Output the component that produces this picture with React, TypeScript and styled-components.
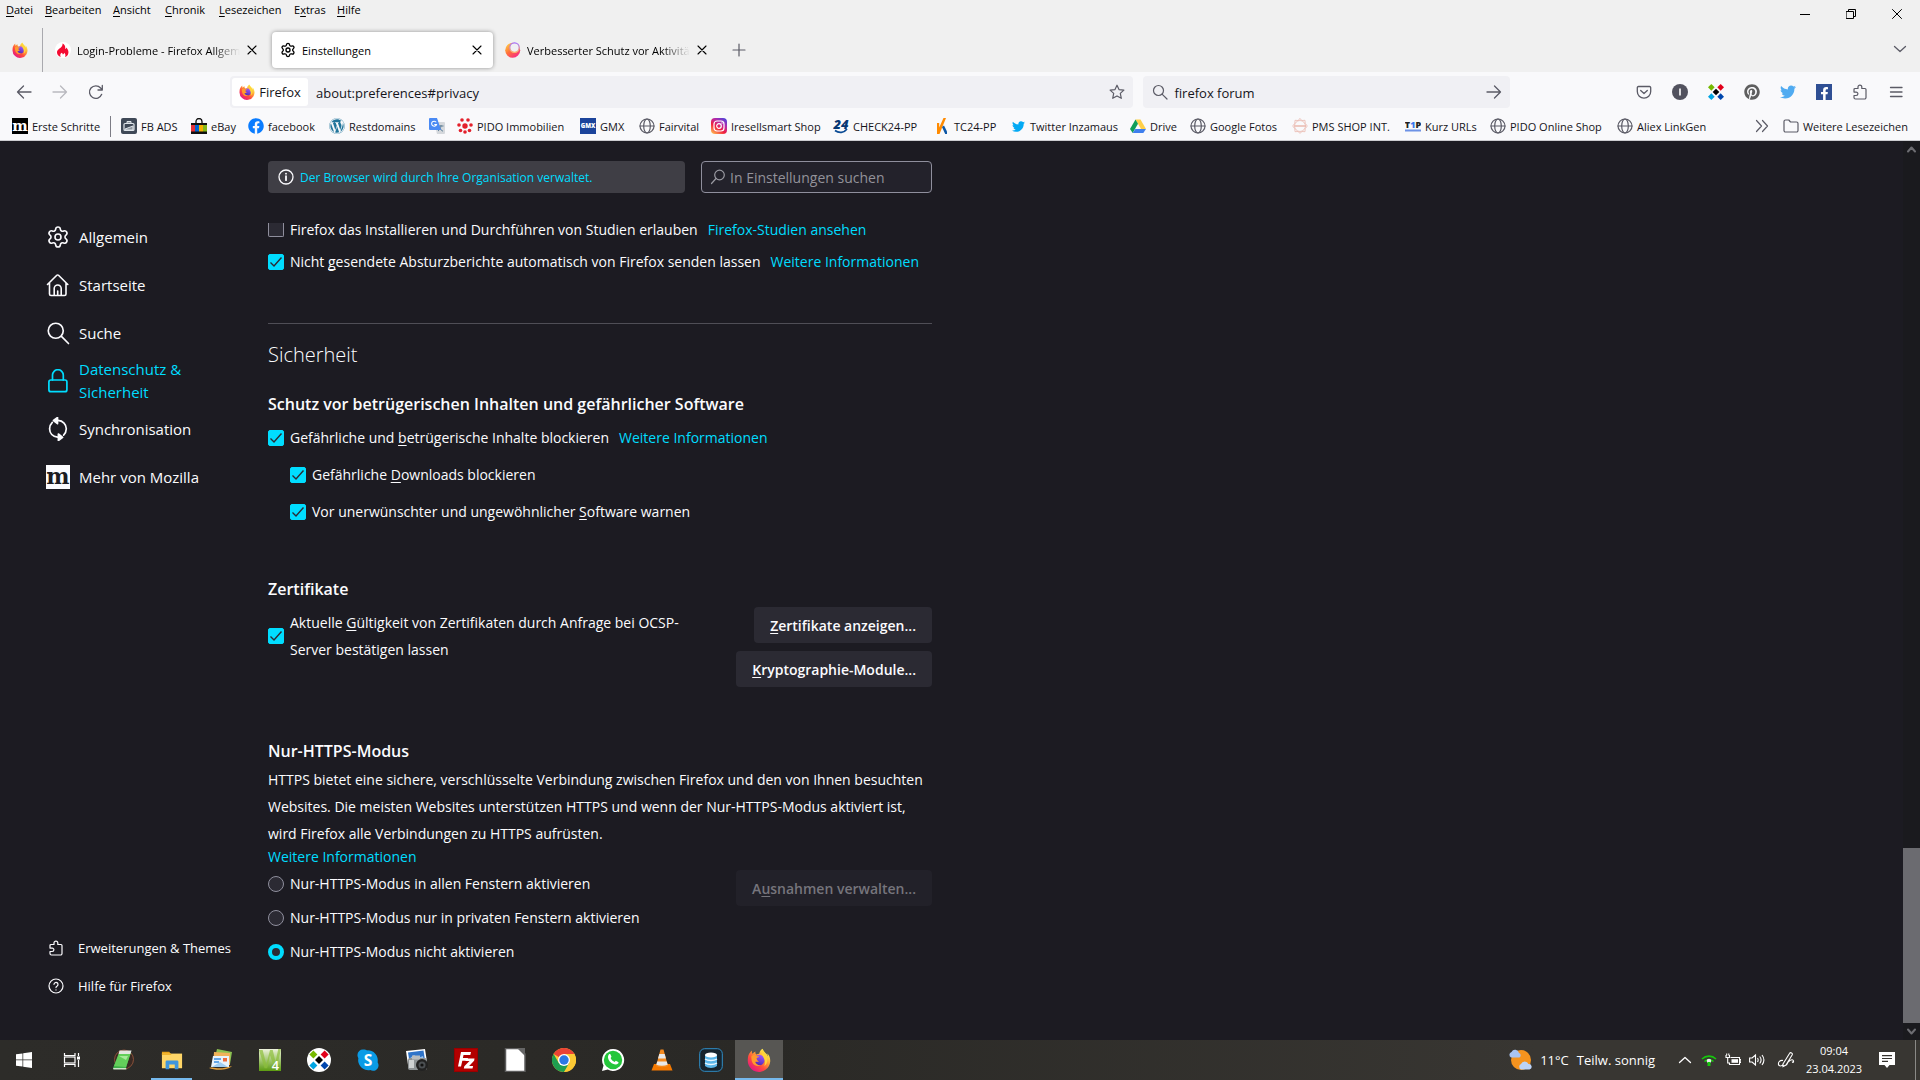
import React from "react";
import styled, { createGlobalStyle, css } from "styled-components";
import { Settings } from "lucide-react";
import {
  FaFacebook,
  FaFacebookF,
  FaPinterest,
  FaTwitter,
  FaWordpress,
} from "react-icons/fa";

const UI_FONT = '"Open Sans", "Noto Sans", sans-serif';
const ACCENT = "#00ddff";

const GlobalStyle = createGlobalStyle`
  * { box-sizing: border-box; }
  body { margin: 0; font-family: ${UI_FONT}; background: #1c1b22; overflow: hidden; }
  button, input { font-family: inherit; }
  a { text-decoration: none; color: inherit; }
  h1, h2, p, ul { margin: 0; padding: 0; }
  svg { display: block; flex-shrink: 0; }
`;

/* ---------- shared ---------- */

const Key = styled.u`
  text-underline-offset: 2px;
  text-decoration-skip-ink: none;
`;

/** Renders a label whose access key is preceded by an underscore. */
const Ak = ({ t }: { t: string }) => {
  const i = t.indexOf("_");
  if (i < 0) return <>{t}</>;
  return (
    <span>
      {t.slice(0, i)}
      <Key>{t[i + 1]}</Key>
      {t.slice(i + 2)}
    </span>
  );
};

type IconProps = { size?: number; children?: React.ReactNode; box?: number; w?: number };

const Line = ({ size = 16, box = 16, w = 1.2, children }: IconProps) => (
  <svg
    width={size}
    height={size}
    viewBox={`0 0 ${box} ${box}`}
    fill="none"
    stroke="currentColor"
    strokeWidth={w}
    strokeLinecap="round"
    strokeLinejoin="round"
    aria-hidden="true"
  >
    {children}
  </svg>
);

const Art = ({ size = 16, box = 24, children }: IconProps) => (
  <svg width={size} height={size} viewBox={`0 0 ${box} ${box}`} aria-hidden="true">
    {children}
  </svg>
);

/* ---------- drawings ---------- */

const FirefoxLogo = ({ size = 16 }: { size?: number }) => (
  <Art size={size} box={32}>
    <defs>
      <linearGradient id="ffBody" x1="0.88" y1="0.1" x2="0.2" y2="0.95">
        <stop offset="0.05" stopColor="#fff44f" />
        <stop offset="0.35" stopColor="#ffa436" />
        <stop offset="0.65" stopColor="#ff4a3f" />
        <stop offset="1" stopColor="#e31587" />
      </linearGradient>
      <linearGradient id="ffGlobe" x1="0.7" y1="0" x2="0.3" y2="1">
        <stop offset="0" stopColor="#a257ff" />
        <stop offset="1" stopColor="#4b2bb0" />
      </linearGradient>
    </defs>
    <path
      fill="url(#ffBody)"
      d="M30 11.5c-.7-1.8-2-3.700-3.200-4.300.9 1.700 1.200 3 1.300 4C26 7 22.500 5.500 20.800 1c-3 1.600-4.400 5-4.500 6.800-1.400.1-2.700.4-3.800 1-1.500-1-1.600-3.200-1.200-4.300-1.600.6-3 1.700-4 3-.8-.8-.8-3.200-.6-4.300C3.500 5.500 1.500 9 1.200 13L1 16.500a15 15 0 1 0 29-5z"
    />
    <circle cx="16.500" cy="16" r="7" fill="url(#ffGlobe)" />
    <path
      fill="#ff9b2d"
      d="M6 10.500c2.500-1.500 5-1.200 6.500 0 1.500.3 3.500.3 3.800.7-.2 1.300-3 1.600-3.600 2.300.4 2 1.500 3.500 3.300 4.500-2 .6-4-.2-5 .6.8 2.600 4 4.800 7.500 4.300-4 2.400-9.500.8-11.500-4C6 16 5.500 13 6 10.500z"
    />
    <path
      fill="#ffd43a"
      d="M21 2c.6 4 5 6 6 11.500.8 4.500-1 8.500-4 10.500 1.500-3 1.500-6.500 0-9.500-1-2-2.500-4-3-6.500-.3-2 0-4.500 1-6z"
    />
  </Art>
);

const GearIcon = ({ size = 16, w = 1.8 }) => <Settings size={size} strokeWidth={w} aria-hidden="true" />;

const HouseIcon = () => (
  <Line size={24} box={24} w={1.600}>
    <path d="M1.500 11.500 10.800 2.300a1.200 1.200 0 0 1 1.700 0l9.300 9.200M3.500 10v11a1.500 1.500 0 0 0 1.500 1.500h13.500A1.500 1.500 0 0 0 20 21V10M8.200 22v-6.500a3.500 3.500 0 0 1 7 0V22M11.700 18v4" />
  </Line>
);

const LensIcon = ({ size = 16, w = 1.2 }) => (
  <Line size={size} w={w}>
    <circle cx="6.500" cy="6.500" r="5" />
    <path d="m10.300 10.300 4.700 4.700" />
  </Line>
);

const LensLeftIcon = () => (
  <Line size={16} w={1.200}>
    <circle cx="9.500" cy="6" r="4.800" />
    <path d="M6 9.500 1.500 14.500" />
  </Line>
);

const LockIcon = () => (
  <Line size={24} box={24} w={1.700}>
    <rect x="2.900" y="11" width="18" height="11.700" rx="2" />
    <path d="M6.500 11V6.100a5.400 5.400 0 0 1 10.800 0V11" />
  </Line>
);

const SyncIcon = () => (
  <Line size={24} box={24} w={1.700}>
    <path d="M6.300 5.300A9 9 0 0 0 3.600 11.800c0 4.300 3 7.700 8 8.400M12 3.400c5 .3 8.300 4 8.300 8.400a9 9 0 0 1-2.700 6.300" />
    <path d="m11.500.5-4 3 4 3.200zM12.400 17l4.200 3.300-4.200 3.200z" fill="currentColor" />
  </Line>
);

const MozillaM = ({ size = 16, bg = "#000", fg = "#fff" }) => (
  <Art size={size}>
    <rect width="24" height="24" fill={bg} />
    <text x="12" y="19" textAnchor="middle" fontFamily='"DejaVu Serif", serif' fontWeight="bold" fontSize="22" fill={fg}>
      m
    </text>
  </Art>
);

const PuzzleIcon = ({ size = 16 }) => (
  <Line size={size} w={1.2}>
    <path d="M2 5.500A1 1 0 0 1 3 4.500h3V3a1.900 1.900 0 0 1 3.800 0v1.500h3.200a1 1 0 0 1 1 1v8a1.500 1.500 0 0 1-1.500 1.500H3.500A1.500 1.500 0 0 1 2 13.500v-2h2.200a1.700 1.700 0 0 0 0-3.400H2z" />
  </Line>
);

const HelpIcon = () => (
  <Line size={16} w={1.200}>
    <circle cx="8" cy="8" r="7" />
    <path d="M6 6.300a2 2 0 1 1 3.200 1.700C8.400 8.500 8 8.800 8 9.600M8 11.800v.1" />
  </Line>
);

const InfoIcon = () => (
  <Line size={16} w={1.300}>
    <circle cx="8" cy="8" r="7" />
    <path d="M8 7.200v4M8 4.600v.1" strokeWidth="1.800" />
  </Line>
);

const CloseIcon = ({ size = 10 }) => (
  <Line size={size} box={10} w={1.100}>
    <path d="m1 1 8 8M9 1 1 9" />
  </Line>
);

const ArrowLeft = () => (
  <Line w={1.300}>
    <path d="M15 8H1.500M7.500 2l-6 6 6 6" />
  </Line>
);
const ArrowRight = () => (
  <Line w={1.300}>
    <path d="M1 8h13.500M8.500 2l6 6-6 6" />
  </Line>
);
const ReloadIcon = () => (
  <Line w={1.300}>
    <path d="M13.700 10.300A6.300 6.300 0 1 1 12.600 4L14 5.500M14.300 1.500V6H10" />
  </Line>
);
const StarIcon = () => (
  <Line w={1.200}>
    <path d="m8 1.200 2 4.400 4.900.5-3.600 3.300 1 4.900L8 11.900l-4.300 2.400 1-4.900L1.100 6.100 6 5.600z" />
  </Line>
);
const ChevronDown = () => (
  <Line size={14} box={14} w={1.300}>
    <path d="m1.500 4.500 5.500 5 5.500-5" />
  </Line>
);
const PlusIcon = () => (
  <Line size={14} box={14} w={1.200}>
    <path d="M7 1v12M1 7h12" />
  </Line>
);
const PocketIcon = () => (
  <Line w={1.300}>
    <path d="M2.500 2.500h11A1.300 1.300 0 0 1 14.700 4v3.500a6.700 6.700 0 0 1-13.400 0V4A1.300 1.300 0 0 1 2.500 2.500z" />
    <path d="m4.700 6.500 3.300 3 3.300-3" />
  </Line>
);
const InfoDot = () => (
  <Art box={16}>
    <circle cx="8" cy="8" r="8" fill="#52525e" />
    <rect x="7.200" y="4.500" width="1.600" height="7" fill="#fff" />
  </Art>
);
const Diamonds = ({ size = 16, disc = false }) => (
  <Art size={size} box={24}>
    {disc && <circle cx="12" cy="12" r="12" fill="#fff" />}
    <g transform={disc ? "translate(2.400 2.400) scale(.8)" : undefined}>
      <path fill="#76b900" d="m5 0 5 5-5 5-5-5z" />
      <path fill="#e2001a" d="m19 0 5 5-5 5-5-5z" />
      <path fill="#000" d="m12 7 5 5-5 5-5-5z" />
      <path fill="#00a5e3" d="m5 14 5 5-5 5-5-5z" />
      <path fill="#0046ad" d="m19 14 5 5-5 5-5-5z" />
    </g>
  </Art>
);
const FacebookSquare = () => (
  <FacebookTile>
    <FaFacebookF size={13} />
  </FacebookTile>
);
const MenuLines = () => (
  <Line w={1.300}>
    <path d="M2.500 3.500h11.500M2.500 8h11.500M2.500 12.500h11.500" />
  </Line>
);

const GlobeIcon = () => (
  <Line w={1.200}>
    <circle cx="8" cy="8" r="7" />
    <ellipse cx="8" cy="8" rx="3.300" ry="7" />
    <path d="M1 8h14" />
  </Line>
);
const FolderIcon = () => (
  <Line w={1.200}>
    <path d="M1 3.500A1.500 1.500 0 0 1 2.500 2h3.300L7.500 4H13.500A1.500 1.500 0 0 1 15 5.500v7A1.500 1.500 0 0 1 13.500 14h-11A1.500 1.500 0 0 1 1 12.500z" />
  </Line>
);
const BagIcon = () => (
  <Art box={16}>
    <rect width="16" height="16" rx="2" fill="#3f4957" />
    <rect x="3" y="5.500" width="10" height="7" rx="1" fill="none" stroke="#dfe5ea" strokeWidth="1.200" />
    <path d="M6 5.500v-2h4v2M4 11l8-3v4H4z" fill="#dfe5ea" fillOpacity=".5" stroke="#dfe5ea" />
  </Art>
);
const EbayIcon = () => (
  <Art box={16}>
    <path d="M5 6V3.500a3 3 0 0 1 6 0V6" fill="none" stroke="#111" strokeWidth="1.300" />
    <rect y="5" width="16" height="2.500" fill="#111" />
    <rect y="7" width="4" height="7" fill="#e53238" />
    <rect x="4" y="7" width="4" height="7" fill="#0064d2" />
    <rect x="8" y="7" width="4" height="7" fill="#f5af02" />
    <rect x="12" y="7" width="4" height="7" fill="#86b817" />
    <rect y="13.500" width="16" height="2.500" fill="#111" />
  </Art>
);
const TranslateIcon = () => (
  <Art box={16}>
    <path d="M5 4h10a1 1 0 0 1 1 1v10a1 1 0 0 1-1 1H8z" fill="#d5d8dc" />
    <path d="M9.500 8h5M12 7v1c-.3 2-1.500 4-3 5M10.500 9.500c.8 1.800 2 3 3.500 3.700" stroke="#5f7f95" fill="none" />
    <path d="M1 0h7l4 12H1a1 1 0 0 1-1-1V1a1 1 0 0 1 1-1z" fill="#4a8af4" />
    <path d="M7.200 4.300A2.500 2.500 0 1 0 7.500 6.500H5.300" stroke="#fff" strokeWidth="1.100" fill="none" />
  </Art>
);
const DotsIcon = () => (
  <Art box={16}>
    <g fill="#e3202b">
      <circle cx="8" cy="8" r="2.700" />
      <circle cx="5" cy="2" r="1.800" />
      <circle cx="11" cy="2" r="1.800" />
      <circle cx="14" cy="7" r="1.800" />
      <circle cx="2" cy="7" r="1.800" />
      <circle cx="3.500" cy="12.500" r="1.800" />
      <circle cx="8" cy="14" r="1.800" />
      <circle cx="12.500" cy="12.500" r="1.800" />
    </g>
  </Art>
);
const GmxIcon = () => (
  <Art box={16}>
    <rect width="16" height="16" fill="#1c449b" />
    <text x="8" y="10.200" textAnchor="middle" fontFamily='"Open Sans", sans-serif' fontWeight="800" fontSize="6" fill="#fff">
      GMX
    </text>
  </Art>
);
const InstaIcon = () => (
  <Art box={16}>
    <defs>
      <linearGradient id="insta" x1="0.1" y1="1" x2="0.8" y2="0">
        <stop offset="0" stopColor="#fec053" />
        <stop offset="0.4" stopColor="#f2203e" />
        <stop offset="0.7" stopColor="#b729a8" />
        <stop offset="1" stopColor="#5342d6" />
      </linearGradient>
    </defs>
    <rect width="16" height="16" rx="4" fill="url(#insta)" />
    <rect x="3" y="3" width="10" height="10" rx="3" fill="none" stroke="#fff" strokeWidth="1.200" />
    <circle cx="8" cy="8" r="2.300" fill="none" stroke="#fff" strokeWidth="1.200" />
    <circle cx="11" cy="5" r=".7" fill="#fff" />
  </Art>
);
const Check24Icon = () => (
  <Art box={16}>
    <text x="8" y="10.500" textAnchor="middle" fontFamily='"Open Sans", sans-serif' fontWeight="800" fontStyle="italic" fontSize="13" fill="#063773">
      24
    </text>
    <path d="M2 12.500c4 3 9 2.500 12-1.500" fill="none" stroke="#0a4a94" strokeWidth="1.700" />
  </Art>
);
const TarifIcon = () => (
  <Art box={16}>
    <path d="M3 5h2.200v4.500L9.500 0H12L5.500 16H3z" fill="#ff8a00" />
    <path d="m8 9 2-1.500 3 6V16h-1.800z" fill="#0d57a6" />
  </Art>
);
const DriveIcon = () => (
  <Art box={16}>
    <path d="M5.500 1.500h5L16 11h-5z" fill="#ffcf48" />
    <path d="M5.500 1.500 8 5.800 2.700 15 0 11z" fill="#0f9d58" />
    <path d="M5.300 11H16l-2.700 4H2.700z" fill="#3f7fee" />
  </Art>
);
const SealIcon = () => (
  <Line w={0.8}>
    <g stroke="#eab9ae">
      <circle cx="8" cy="8" r="5.500" />
      <path d="M8 .7 10 2.500l3-.2.200 3L15.300 8l-2.100 2.700-.2 3-3-.2L8 15.300 6 13.500l-3 .2-.2-3L.7 8l2.100-2.700.2-3 3 .2z" />
      <path d="M3 8h10" strokeWidth="1.500" />
    </g>
  </Line>
);
const T1pIcon = () => (
  <Art box={16}>
    <text x="8" y="9.500" textAnchor="middle" fontFamily='"Open Sans", sans-serif' fontWeight="800" fontSize="9" fill="#222">
      T<tspan fill="#3a76ee">1</tspan>P
    </text>
    <rect y="11.500" width="16" height="2" fill="#6d92e6" />
  </Art>
);
const FlameIcon = () => (
  <Art box={16}>
    <circle cx="8" cy="8" r="8" fill="#fff" />
    <path
      d="M7.500 1.500c3 1.500 3 4 2.500 5.500.7 0 1.200-.6 1.300-1.400C13.500 8 14 10.500 13 12.500c-.7 1.500-2 2.300-3 2.500.8-1.300.5-3-.8-4.200-.2 1-.8 1.500-1.400 1.700C7.600 11.500 7 11 6.500 10.800c-1.500 1.200-1.500 3-.7 4.200C3.500 14.300 2 12.500 2 10.500 2 7.500 4.500 7 6.300 5 7.300 4 7.700 2.800 7.500 1.500z"
      fill="#f40b32"
    />
  </Art>
);
const OrbIcon = () => (
  <Art box={16}>
    <defs>
      <linearGradient id="orb" x1="0" y1="0" x2="0.8" y2="1">
        <stop offset="0" stopColor="#ffe14a" />
        <stop offset="0.5" stopColor="#ff7139" />
        <stop offset="1" stopColor="#f8238c" />
      </linearGradient>
      <linearGradient id="orbRing" x1="0" y1="0" x2="0" y2="1">
        <stop offset="0" stopColor="#a26bff" />
        <stop offset="1" stopColor="#ffb36b" />
      </linearGradient>
    </defs>
    <circle cx="7.700" cy="8.300" r="7.500" fill="url(#orb)" />
    <circle cx="9.500" cy="5.600" r="4.700" fill="#efeff3" stroke="url(#orbRing)" strokeWidth="1.300" />
  </Art>
);

/* taskbar drawings */
const WindowsIcon = () => (
  <Art size={16} box={16}>
    <path fill="#fff" d="M0 2.300 6.500 1.400v6.200H0zM7.200 1.300 16 0v7.600H7.200zM0 8.300h6.500v6.300L0 13.700zM7.200 8.300H16V16l-8.800-1.200z" />
  </Art>
);
const TaskViewIcon = () => (
  <Art size={18} box={18}>
    <g fill="none" stroke="#fff" strokeWidth="1.200">
      <path d="M1.500 2v2.500h10.500V2M1.500 16v-2.500h10.500V16M15.500 2v3M15.500 9v7" />
      <rect x="1.500" y="6" width="10.500" height="6" />
    </g>
    <rect x="14" y="5.500" width="3" height="3" fill="#fff" />
  </Art>
);
const NotebookIcon = () => (
  <Art size={24}>
    <circle cx="13" cy="11.500" r="9.500" fill="#3a2a24" stroke="#8a5038" />
    <path d="M9 3.500h11l-5 16.500H2z" fill="#3fae49" />
    <path d="M8.500 2.500h12l-1 3.500H7.500z" fill="#e3e6e0" />
    <path d="M7.500 6h12L15 19 3 18z" fill="#63cf5a" />
    <path d="m8 8 9 0-2 4z" fill="#a8eb9a" />
    <path d="M2 20h13l.5 1.500H2.500z" fill="#c9e6c6" />
  </Art>
);
const ExplorerIcon = () => (
  <Art size={22}>
    <path d="M1 3h8l2 3H1z" fill="#e8a31a" />
    <path d="M1 5h22v16H1z" fill="#ffd667" />
    <path d="M1 4.500h9l1.500 2H1z" fill="#f0b32c" />
    <path d="M5 14a1.500 1.500 0 0 1 1.500-1.500h11A1.500 1.500 0 0 1 19 14v8h-4v-5H9v5H5z" fill="#3f96dd" />
  </Art>
);
const MailIcon = () => (
  <Art size={24}>
    <path d="m8 1 15 3-2 12-16-3z" fill="#8cc152" />
    <path d="m5 4 16 1v12H4z" fill="#f0b25a" />
    <path d="M4 8h16v11H2z" fill="#e8f3fc" />
    <path d="M5 11h7M5 14h5" stroke="#3a8ee0" strokeWidth="1.500" />
    <path d="m3 19 8-5 8 5z" fill="#9fcdf2" />
    <rect x="14" y="10" width="4" height="3.500" fill="#ef6b3a" />
    <path d="M0 20c6-2 8 3 23-2-3 4-16 5-23 2z" fill="#e6a23c" />
  </Art>
);
const W4Icon = () => (
  <Art size={22}>
    <defs>
      <linearGradient id="w4" x1="0" y1="0" x2="0" y2="1">
        <stop offset="0" stopColor="#eef3dc" />
        <stop offset="1" stopColor="#5c9c10" />
      </linearGradient>
    </defs>
    <rect width="24" height="24" fill="url(#w4)" />
    <path d="M0 1h4l4 16 4-16h3l3 13 3-14h3l-4 18h-4L12 7 9 21H6z" fill="#8dbf3c" fillOpacity=".7" />
    <text x="18" y="22.500" textAnchor="middle" fontFamily='"Open Sans", sans-serif' fontWeight="600" fontSize="14" fill="#fff">
      4
    </text>
  </Art>
);
const SkypeIcon = () => (
  <Art size={22}>
    <path d="M7 .5c2 0 3 .6 4 1a11 11 0 0 1 11.500 13c.8 1.500 1 2.500 1 3.500a6 6 0 0 1-9 5A11 11 0 0 1 1.500 10C.8 8.500.5 7.500.5 6.500A6 6 0 0 1 7 .5z" fill="#0a9be6" />
    <text x="12" y="18" textAnchor="middle" fontFamily='"Open Sans", sans-serif' fontWeight="bold" fontSize="17" fill="#fff">
      S
    </text>
  </Art>
);
const CameraIcon = () => (
  <Art size={24}>
    <path d="m1 3 19-2 2 13L3 17z" fill="#fff" />
    <path d="m3 4.500 15.500-2L20 12 4.500 14z" fill="#2f74c9" />
    <path d="m4 11 5-4 4 3 5-2 1 5H5z" fill="#9cc3ec" />
    <rect x="3" y="10" width="19" height="12" rx="2" fill="#8e9395" />
    <rect x="7" y="7.500" width="8" height="4" fill="#b9bdbf" />
    <rect x="4" y="12" width="5" height="8" fill="#cfd2d3" />
    <circle cx="17" cy="17" r="6" fill="#222" />
    <circle cx="17" cy="17" r="3.500" fill="#4b4f52" />
    <circle cx="17" cy="17" r="1.600" fill="#111" />
  </Art>
);
const FileZillaIcon = () => (
  <Art size={24}>
    <rect width="24" height="24" fill="#b30000" />
    <rect x=".5" y=".5" width="23" height="23" fill="none" stroke="#7c0000" strokeDasharray="1 1" />
    <path d="M7 4h10l-.7 3H9.500l-.6 3H14l-.6 2.800H8.300L7 18.500H4z" fill="#fff" />
    <path d="M12 10.500h8.500l-.4 2.300-5 5.200h4l-.6 2.500H9.800l.5-2.300 5.200-5.200H11.500z" fill="#fff" />
  </Art>
);
const DocumentIcon = () => (
  <Art size={24}>
    <path d="M2.500.5H17l5 5.500v17.500h-19.500z" fill="#fff" stroke="#5d5d5d" strokeWidth="1.500" />
    <path d="M14 0h8v8z" fill="#666" />
  </Art>
);
const ChromeIcon = () => (
  <Art size={24}>
    <circle cx="12" cy="12" r="12" fill="#fcc934" />
    <path d="M12 12 1.600 6A12 12 0 0 1 22.400 6H12z" fill="#ea4335" />
    <path d="M12 24A12 12 0 0 1 1.600 6l5.200 9L12 18h5.200z" fill="#1e9e50" />
    <path d="M12 24 17.200 15 12 12l-5 3z" fill="#1e9e50" />
    <path d="M22.400 6A12 12 0 0 1 12 24l5.200-9V6z" fill="#fcc934" />
    <circle cx="12" cy="12" r="6" fill="#fff" />
    <circle cx="12" cy="12" r="4.700" fill="#2a78e4" />
  </Art>
);
const WhatsAppIcon = () => (
  <Art size={24}>
    <path d="M12 1a11 11 0 1 1-5.200 20.600L1 23l1.500-5.500A11 11 0 0 1 12 1z" fill="#fff" />
    <circle cx="12" cy="12" r="9.200" fill="#25c63b" />
    <path
      d="M8 6.300c.5-.5 1.200-.5 1.500.1l.9 2c.2.500-.6 1.200-.8 1.600.7 1.800 2.300 3.300 4.100 4 .5-.5 1-1.300 1.500-1.100l2 1c.5.300.3 1.200-.1 1.700-2 2-5.500.6-7.500-1.300C7.300 12.300 6 8.500 8 6.300z"
      fill="#fff"
    />
  </Art>
);
const VlcIcon = () => (
  <Art size={24}>
    <path d="M4 16h16l2.500 6.500h-21z" fill="#f57900" />
    <path d="M10.500 1.500h3L18 18c-3 1.600-9 1.600-12 0z" fill="#f58a1f" />
    <path d="m9.300 6 5.400 0 1.200 4.500H8z" fill="#e9e9e9" />
    <path d="M7.200 13.500h9.600l.9 3.200c-3.500 1.300-8 1.300-11.400 0z" fill="#e9e9e9" />
  </Art>
);
const DatabaseIcon = () => (
  <Art size={24}>
    <rect x=".7" y=".7" width="22.600" height="22.600" rx="5" fill="#17242e" stroke="#2f8fc9" />
    <path d="M6 7h12v11c-3 2.500-9 2.500-12 0z" fill="#5ab6ea" />
    <ellipse cx="12" cy="7" rx="6" ry="2.500" fill="#fff" />
    <path d="M6 11c3 2 9 2 12 0M6 15c3 2 9 2 12 0" stroke="#e8f6ff" strokeWidth="1.500" fill="none" />
  </Art>
);
const WeatherIcon = () => (
  <Art size={24}>
    <circle cx="13" cy="12" r="10" fill="#f5931e" />
    <path d="M3 9.500a3 3 0 0 1 .5-5.500 4 4 0 0 1 7.500 1 2.500 2.500 0 0 1 .5 4.500z" fill="#a9c4f2" />
    <path d="M13 21.500a3 3 0 0 1 0-5.500 4 4 0 0 1 7.500 0 2.800 2.800 0 0 1 1 5.500z" fill="#bcd3f8" />
  </Art>
);
const WifiIcon = () => (
  <Art size={16} box={16}>
    <g fill="none" stroke="#16c60c" strokeWidth="1.600">
      <path d="M1 7a10 10 0 0 1 14 0M3.500 9.500a6.500 6.500 0 0 1 9 0" />
    </g>
    <circle cx="8" cy="9" r="2.300" fill="#e8e8e8" />
    <path d="M6.500 10h3v4h-3z" fill="#16c60c" />
  </Art>
);
const BatteryIcon = () => (
  <Art size={16} box={16}>
    <g fill="none" stroke="#fff" strokeWidth="1.100">
      <path d="M5.500 5.500h9v7h-10v-2M14.500 7.500h1.300v3h-1.300M1 3v2.500h3.500V3M2.700 5.500V11h1.800M1.700 1.500v2M3.800 1.500v2" />
    </g>
    <rect x="6.500" y="7.200" width="6.500" height="3.600" fill="#fff" />
  </Art>
);
const SpeakerIcon = () => (
  <Art size={16} box={16}>
    <path d="M.6 6h2.500L6.500 3v10L3.100 10H.6zM8.500 6c.8 1.200.8 2.800 0 4M10.700 4.500c1.600 2 1.600 5 0 7M13 3c2.300 3 2.300 7 0 10" fill="none" stroke="#fff" strokeWidth="1.100" />
  </Art>
);
const PenIcon = () => (
  <Art size={18} box={18}>
    <path d="M6 13 12.500 2.500a1.500 1.500 0 0 1 2.600 1.500L9 14l-3 1.500zM6 9.500c-3-.5-5 1.500-4.500 4 .5 2 3 2 4.500 0M9.500 14c1.500-4 6-7 7-4 .3 1.500-1.500 2-1 .5" fill="none" stroke="#fff" strokeWidth="1.100" />
  </Art>
);
const NoteIcon = () => (
  <Art size={18} box={18}>
    <path d="M1 1h16v13h-5.500L9 17l-2.500-3H1z" fill="#fff" />
    <path d="M4 4.700h10M4 7.500h10M4 10.300h6" stroke="#35332f" strokeWidth="1.200" />
  </Art>
);

/* ---------- layout ---------- */

const Screen = styled.div`
  display: flex;
  flex-direction: column;
  height: 100vh;
  color: #15141a;
`;

const bare = css`
  display: flex;
  align-items: center;
  justify-content: center;
  padding: 0;
  border: 0;
  background: none;
  color: inherit;
`;

const TitleArea = styled.header`
  display: flex;
  justify-content: space-between;
  height: 72px;
  background: #f0f0f0;
`;
const TitleLeft = styled.div`
  display: flex;
  flex-direction: column;
  justify-content: space-between;
`;
const MenuBar = styled.nav`
  display: flex;
  height: 18px;
  padding-left: 6px;
`;
const MenuItem = styled.button<{ $w: number }>`
  ${bare}
  justify-content: flex-start;
  width: ${(p) => p.$w}px;
  color: #000;
  font-size: 11px;
  white-space: nowrap;
`;
const TabStrip = styled.div`
  display: flex;
  align-items: center;
  height: 44px;
`;
const PinnedTab = styled.button`
  ${bare}
  width: 43px;
  height: 44px;
  padding-right: 3px;
  border-right: 1px solid #a9a9ae;
  margin-right: 2px;
`;
const Tab = styled.div<{ $active?: boolean }>`
  display: flex;
  align-items: center;
  gap: 6px;
  width: 221px;
  height: 36px;
  margin: 0 2px;
  padding: 0 10px 0 8px;
  border-radius: 4px;
  color: #000;
  font-size: 11px;
  ${(p) => p.$active && "background: #fff; box-shadow: 0 0 4px rgba(0, 0, 0, 0.4);"}
`;
const TabTitle = styled.span<{ $fade?: boolean }>`
  flex: 1;
  overflow: hidden;
  white-space: nowrap;
  ${(p) => p.$fade && "mask-image: linear-gradient(to left, transparent, #000 28px);"}
`;
const TabClose = styled.button`
  ${bare}
  width: 12px;
  height: 20px;
`;
const NewTab = styled.button`
  ${bare}
  width: 34px;
  height: 32px;
  margin-left: 2px;
  color: #5b5b66;
`;
const TitleRight = styled.div`
  display: flex;
  flex-direction: column;
  align-items: flex-end;
`;
const WindowButtons = styled.div`
  display: flex;
  color: #000;
`;
const WindowButton = styled.button`
  ${bare}
  width: 46px;
  height: 28px;
`;
const TabsMenu = styled.button`
  ${bare}
  width: 40px;
  height: 42px;
  color: #5b5b66;
`;

const NavBar = styled.div`
  display: flex;
  align-items: center;
  height: 40px;
  padding: 0 6px;
  background: #f9f9fb;
  color: #5b5b66;
`;
const ToolButton = styled.button<{ $dim?: boolean; $inner?: boolean }>`
  ${bare}
  width: ${(p) => (p.$inner ? 32 : 36)}px;
  height: 32px;
  opacity: ${(p) => (p.$dim ? 0.4 : 1)};
`;
const UrlBar = styled.div`
  display: flex;
  align-items: center;
  flex: 716;
  height: 32px;
  margin-left: 116px;
  padding-left: 2px;
  border-radius: 4px;
  background: #f0f0f4;
`;
const Identity = styled.button`
  ${bare}
  gap: 4px;
  width: 76px;
  height: 28px;
  border-radius: 3px;
  background: #fff;
  color: #15141a;
  font-size: 13px;
`;
const BarInput = styled.input`
  flex: 1;
  min-width: 0;
  height: 28px;
  padding: 2px 8px 0;
  border: 0;
  outline: 0;
  background: none;
  color: #15141a;
  font-size: 13px;
`;
const SearchBar = styled.div`
  display: flex;
  align-items: center;
  flex: 284;
  height: 32px;
  margin: 0 116px 0 10px;
  padding-left: 9px;
  border-radius: 4px;
  background: #f0f0f4;
  ${BarInput} { padding-left: 6px; }
`;
const FacebookTile = styled.span`
  display: flex;
  align-items: flex-end;
  justify-content: center;
  width: 16px;
  height: 16px;
  background: #2f4f94;
  color: #fff;
`;

const BookmarksBar = styled.nav`
  display: flex;
  align-items: center;
  height: 29px;
  padding: 0 12px;
  border-bottom: 1px solid #ccccd0;
  background: #f9f9fb;
  font-size: 11px;
`;
const Bookmark = styled.a<{ $w?: number }>`
  display: flex;
  align-items: center;
  gap: 4px;
  width: ${(p) => (p.$w ? `${p.$w}px` : "auto")};
  white-space: nowrap;
`;
const BookmarkIcon = styled.span<{ $c?: string }>`
  display: flex;
  justify-content: center;
  width: 16px;
  color: ${(p) => p.$c || "#5b5b66"};
`;
const BookmarkSeparator = styled.span`
  width: 1px;
  height: 21px;
  margin-right: 10px;
  background: #7c7c85;
`;
const Overflow = styled.button`
  ${bare}
  margin-left: auto;
  margin-right: 14px;
  color: #5b5b66;
`;

/* ---------- preferences page ---------- */

const Page = styled.div`
  display: flex;
  flex: 1;
  min-height: 0;
  background: #1c1b22;
  color: #fbfbfe;
`;
const Sidebar = styled.aside`
  display: flex;
  flex-direction: column;
  justify-content: space-between;
  width: 268px;
  padding: 72px 0 35px 46px;
`;
const Categories = styled.nav`
  display: flex;
  flex-direction: column;
`;
const Category = styled.a<{ $active?: boolean }>`
  display: flex;
  align-items: center;
  gap: 9px;
  height: 48px;
  padding-right: 60px;
  color: ${(p) => (p.$active ? ACCENT : "inherit")};
  font-size: 15px;
  line-height: 23px;
`;
const FooterLink = styled.a`
  display: flex;
  align-items: center;
  gap: 14px;
  height: 38px;
  padding-left: 2px;
  font-size: 13px;
`;

const Main = styled.main`
  flex: 1;
  padding-top: 20px;
  font-size: 14px;
`;
const Column = styled.div`
  width: 100%;
  max-width: 664px;
`;
const TopRow = styled.div`
  display: flex;
  gap: 16px;
  height: 32px;
`;
const Managed = styled.a`
  display: flex;
  align-items: center;
  gap: 6px;
  flex: 407;
  padding-left: 10px;
  border-radius: 4px;
  background: #3f3e45;
  color: ${ACCENT};
  font-size: 12px;
  svg { color: #fbfbfe; }
`;
const PrefSearch = styled.label`
  display: flex;
  align-items: center;
  gap: 4px;
  flex: 221;
  min-width: 0;
  padding-left: 8px;
  border: 1px solid #8f8f9d;
  border-radius: 4px;
  background: #23222b;
  color: #9a9aa2;
  input {
    flex: 1;
    min-width: 0;
    padding: 0;
    border: 0;
    outline: 0;
    background: none;
    color: #fbfbfe;
    font-size: 14px;
  }
  input::placeholder { color: #93929a; opacity: 1; }
`;
const Row = styled.div<{ $mt?: number; $indent?: boolean }>`
  display: flex;
  align-items: center;
  gap: 10px;
  margin-top: ${(p) => p.$mt || 0}px;
  padding-left: ${(p) => (p.$indent ? 22 : 0)}px;
  line-height: 22px;
`;
const Choice = styled.label<{ $tall?: boolean }>`
  display: flex;
  align-items: center;
  gap: 6px;
  line-height: ${(p) => (p.$tall ? 27 : 22)}px;
`;
const Box = styled.input<{ $clipped?: boolean }>`
  appearance: none;
  flex-shrink: 0;
  width: 16px;
  height: 16px;
  margin: 0;
  border: 1px solid #8f8f9d;
  border-radius: 2px;
  background: #2b2a33;
  &[type="radio"] { border-radius: 50%; }
  &[type="radio"]:checked { border: 4px solid ${ACCENT}; }
  &[type="checkbox"]:checked {
    border-color: ${ACCENT};
    background: ${ACCENT}
      url("data:image/svg+xml,%3Csvg xmlns='http://www.w3.org/2000/svg' viewBox='0 0 14 14'%3E%3Cpath d='M1.500 7.500 5 11l7.500-8.500' fill='none' stroke='%232b2a33' stroke-width='1.400'/%3E%3C/svg%3E")
      center / 14px no-repeat;
  }
  ${(p) => p.$clipped && "height: 14px; border-top: 0; border-radius: 0 0 2px 2px;"}
`;
const TextLink = styled.a`
  color: ${ACCENT};
`;
const Rule = styled.hr`
  height: 1px;
  margin: 50px 0 0;
  border: 0;
  background: #4f4e56;
`;
const SectionTitle = styled.h1`
  margin-top: 16px;
  font-size: 20px;
  font-weight: 300;
  line-height: 30px;
`;
const GroupTitle = styled.h2<{ $mt: number }>`
  margin-top: ${(p) => p.$mt}px;
  font-size: 16px;
  font-weight: 600;
  line-height: 24px;
`;
const Split = styled.div<{ $mt?: number }>`
  display: flex;
  justify-content: space-between;
  align-items: flex-start;
  margin-top: ${(p) => p.$mt || 0}px;
`;
const Stack = styled.div`
  display: flex;
  flex-direction: column;
  align-items: flex-end;
  gap: 8px;
`;
const Radios = styled.div`
  display: flex;
  flex-direction: column;
  gap: 12px;
  padding-top: 3px;
`;
const PrefButton = styled.button`
  height: 36px;
  padding: 0 16px;
  border: 0;
  border-radius: 4px;
  background: #2b2a33;
  color: #fbfbfe;
  font-size: 14px;
  font-weight: 600;
  white-space: nowrap;
  &:disabled { background: #222129; color: #76757c; }
`;
const OcspChoice = styled.div`
  max-width: 430px;
  padding-top: 2px;
`;
const Paragraph = styled.p`
  padding-top: 3px;
  line-height: 27px;
`;
const MoreLine = styled.p`
  line-height: 20px;
`;

const ScrollTrack = styled.div`
  display: flex;
  flex-direction: column;
  justify-content: space-between;
  align-items: center;
  width: 17px;
  background: #1a1a1e;
  color: #6d6d72;
`;
const ScrollEnd = styled.button`
  ${bare}
  width: 17px;
  height: 17px;
`;
const Thumb = styled.div`
  width: 17px;
  height: 175px;
  margin-top: auto;
  background: #6b6b70;
`;

/* ---------- taskbar ---------- */

const Taskbar = styled.footer`
  display: flex;
  justify-content: space-between;
  height: 40px;
  background: linear-gradient(90deg, #2d2c29, #2a2926 40%, #383632 80%, #383632);
  color: #fff;
`;
const TaskGroup = styled.div`
  display: flex;
  align-items: stretch;
`;
const AppGroup = styled(TaskGroup)`
  margin-left: 2px;
`;
const SystemButton = styled.button`
  ${bare}
  width: 48px;
`;
const TaskButton = styled.button<{ $open?: boolean; $active?: boolean }>`
  ${bare}
  width: ${(p) => (p.$active ? 48 : 41)}px;
  margin: 0 ${(p) => (p.$active ? 0 : 4)}px;
  border-top: 2px solid transparent;
  border-bottom: 2px solid ${(p) => (p.$open ? "#76b9ed" : "transparent")};
  ${(p) => p.$active && "background: #575653; border-top-color: #575653;"}
`;
const Weather = styled.button`
  ${bare}
  gap: 8px;
  margin-right: 22px;
  color: #fff;
  font-size: 13px;
`;
const TrayIcons = styled.div`
  display: flex;
  align-items: center;
  gap: 8px;
  svg:last-child { margin-left: 4px; }
`;
const Clock = styled.div`
  display: flex;
  flex-direction: column;
  justify-content: center;
  width: 78px;
  font-size: 11px;
  line-height: 18px;
  text-align: center;
`;
const NoteButton = styled.button`
  ${bare}
  width: 28px;
  margin-right: 14px;
`;
const ShowDesktop = styled.button`
  width: 5px;
  padding: 0;
  border: 0;
  border-left: 1px solid #8a8986;
  background: none;
`;

/* ---------- data ---------- */

const menus: [string, number][] = [
  ["_Datei", 39],
  ["_Bearbeiten", 68],
  ["_Ansicht", 52],
  ["_Chronik", 54],
  ["_Lesezeichen", 75],
  ["E_xtras", 43],
  ["_Hilfe", 40],
];

const bookmarks: { t: string; w: number; icon: React.ReactNode; c?: string }[] = [
  { t: "FB ADS", w: 70, icon: <BagIcon /> },
  { t: "eBay", w: 57, icon: <EbayIcon /> },
  { t: "facebook", w: 81, icon: <FaFacebook size={16} />, c: "#0a7cff" },
  { t: "Restdomains", w: 100, icon: <FaWordpress size={16} />, c: "#21759b" },
  { t: "", w: 28, icon: <TranslateIcon /> },
  { t: "PIDO Immobilien", w: 123, icon: <DotsIcon /> },
  { t: "GMX", w: 59, icon: <GmxIcon /> },
  { t: "Fairvital", w: 72, icon: <GlobeIcon /> },
  { t: "Iresellsmart Shop", w: 122, icon: <InstaIcon /> },
  { t: "CHECK24-PP", w: 101, icon: <Check24Icon /> },
  { t: "TC24-PP", w: 76, icon: <TarifIcon /> },
  { t: "Twitter Inzamaus", w: 120, icon: <FaTwitter size={13} />, c: "#03a9f4" },
  { t: "Drive", w: 60, icon: <DriveIcon /> },
  { t: "Google Fotos", w: 102, icon: <GlobeIcon /> },
  { t: "PMS SHOP INT.", w: 113, icon: <SealIcon /> },
  { t: "Kurz URLs", w: 85, icon: <T1pIcon /> },
  { t: "PIDO Online Shop", w: 127, icon: <GlobeIcon /> },
  { t: "Aliex LinkGen", w: 100, icon: <GlobeIcon /> },
];

const extensions: [string, React.ReactNode][] = [
  ["Pocket", <PocketIcon />],
  ["Info", <InfoDot />],
  ["Farben", <Diamonds />],
  ["Pinterest", <FaPinterest size={16} color="#5f5f5f" />],
  ["Twitter", <FaTwitter size={16} color="#50abf1" />],
  ["Facebook", <FacebookSquare />],
  ["Erweiterungen", <PuzzleIcon />],
  ["Menü", <MenuLines />],
];

const categories: [string, React.ReactNode][] = [
  ["Allgemein", <GearIcon size={24} w={1.600} />],
  ["Startseite", <HouseIcon />],
  ["Suche", <LensIcon size={24} w={1.100} />],
  ["Datenschutz & Sicherheit", <LockIcon />],
  ["Synchronisation", <SyncIcon />],
  ["Mehr von Mozilla", <MozillaM size={24} bg="#fbfbfe" fg="#1c1b22" />],
];

const apps: [string, React.ReactNode][] = [
  ["Notizen", <NotebookIcon />],
  ["Explorer", <ExplorerIcon />],
  ["Mail", <MailIcon />],
  ["W4", <W4Icon />],
  ["Kacheln", <Diamonds size={24} disc />],
  ["Skype", <SkypeIcon />],
  ["Kamera", <CameraIcon />],
  ["FileZilla", <FileZillaIcon />],
  ["LibreOffice", <DocumentIcon />],
  ["Chrome", <ChromeIcon />],
  ["WhatsApp", <WhatsAppIcon />],
  ["VLC", <VlcIcon />],
  ["Datenbank", <DatabaseIcon />],
  ["Firefox", <FirefoxLogo size={24} />],
];

const CheckRow = ({
  label,
  link,
  mt,
  indent,
  unchecked,
}: {
  label: string;
  link?: string;
  mt: number;
  indent?: boolean;
  unchecked?: boolean;
}) => (
  <Row $mt={mt} $indent={indent}>
    <Choice>
      <Box type="checkbox" defaultChecked={!unchecked} $clipped={unchecked} />
      <Ak t={label} />
    </Choice>
    {link && <TextLink href="#">{link}</TextLink>}
  </Row>
);

export default function App() {
  return (
    <Screen>
      <GlobalStyle />
      <TitleArea>
        <TitleLeft>
          <MenuBar aria-label="Menü">
            {menus.map(([t, w]) => (
              <MenuItem key={t} $w={w}>
                <Ak t={t} />
              </MenuItem>
            ))}
          </MenuBar>
          <TabStrip>
            <PinnedTab aria-label="Firefox View">
              <FirefoxLogo />
            </PinnedTab>
            <Tab>
              <FlameIcon />
              <TabTitle $fade>Login-Probleme - Firefox Allgemein</TabTitle>
              <TabClose aria-label="Tab schließen">
                <CloseIcon />
              </TabClose>
            </Tab>
            <Tab $active>
              <GearIcon size={16} w={2} />
              <TabTitle>Einstellungen</TabTitle>
              <TabClose aria-label="Tab schließen">
                <CloseIcon />
              </TabClose>
            </Tab>
            <Tab>
              <OrbIcon />
              <TabTitle $fade>Verbesserter Schutz vor Aktivitäten</TabTitle>
              <TabClose aria-label="Tab schließen">
                <CloseIcon />
              </TabClose>
            </Tab>
            <NewTab aria-label="Neuer Tab">
              <PlusIcon />
            </NewTab>
          </TabStrip>
        </TitleLeft>
        <TitleRight>
          <WindowButtons>
            <WindowButton aria-label="Minimieren">
              <Line size={10} box={10} w={1}>
                <path d="M0 5.500h10" />
              </Line>
            </WindowButton>
            <WindowButton aria-label="Wiederherstellen">
              <Line size={10} box={10} w={1}>
                <path d="M.5 2.500h7v7h-7zM2.500 2.500v-2h7v7h-2" />
              </Line>
            </WindowButton>
            <WindowButton aria-label="Schließen">
              <Line size={10} box={10} w={1}>
                <path d="m.5.500 9 9M9.500.5l-9 9" />
              </Line>
            </WindowButton>
          </WindowButtons>
          <TabsMenu aria-label="Alle Tabs">
            <ChevronDown />
          </TabsMenu>
        </TitleRight>
      </TitleArea>

      <NavBar>
        <ToolButton aria-label="Zurück">
          <ArrowLeft />
        </ToolButton>
        <ToolButton aria-label="Vor" $dim>
          <ArrowRight />
        </ToolButton>
        <ToolButton aria-label="Neu laden">
          <ReloadIcon />
        </ToolButton>
        <UrlBar>
          <Identity>
            <FirefoxLogo />
            Firefox
          </Identity>
          <BarInput aria-label="Adresse" defaultValue="about:preferences#privacy" />
          <ToolButton aria-label="Lesezeichen hinzufügen" $inner>
            <StarIcon />
          </ToolButton>
        </UrlBar>
        <SearchBar>
          <LensIcon />
          <BarInput aria-label="Suche" defaultValue="firefox forum" />
          <ToolButton aria-label="Suchen" $inner>
            <ArrowRight />
          </ToolButton>
        </SearchBar>
        {extensions.map(([label, icon]) => (
          <ToolButton key={label} aria-label={label}>
            {icon}
          </ToolButton>
        ))}
      </NavBar>

      <BookmarksBar aria-label="Lesezeichen">
        <Bookmark href="#" $w={98}>
          <MozillaM />
          Erste Schritte
        </Bookmark>
        <BookmarkSeparator />
        {bookmarks.map((b, i) => (
          <Bookmark key={i} href="#" $w={b.w} aria-label={b.t || "Übersetzer"}>
            <BookmarkIcon $c={b.c}>{b.icon}</BookmarkIcon>
            {b.t}
          </Bookmark>
        ))}
        <Overflow aria-label="Weitere Lesezeichen anzeigen">
          <Line size={14} box={14} w={1.200}>
            <path d="m1.500 1.500 5 5.500-5 5.500M7.500 1.500l5 5.500-5 5.500" />
          </Line>
        </Overflow>
        <Bookmark href="#">
          <BookmarkIcon>
            <FolderIcon />
          </BookmarkIcon>
          Weitere Lesezeichen
        </Bookmark>
      </BookmarksBar>

      <Page>
        <Sidebar>
          <Categories aria-label="Kategorien">
            {categories.map(([t, icon], i) => (
              <Category key={t} href="#" $active={i === 3}>
                {icon}
                {t}
              </Category>
            ))}
          </Categories>
          <div>
            <FooterLink href="#">
              <PuzzleIcon />
              Erweiterungen & Themes
            </FooterLink>
            <FooterLink href="#">
              <HelpIcon />
              Hilfe für Firefox
            </FooterLink>
          </div>
        </Sidebar>

        <Main>
          <Column>
            <TopRow>
              <Managed href="#">
                <InfoIcon />
                Der Browser wird durch Ihre Organisation verwaltet.
              </Managed>
              <PrefSearch>
                <LensLeftIcon />
                <input type="search" aria-label="In Einstellungen suchen" placeholder="In Einstellungen suchen" />
              </PrefSearch>
            </TopRow>

            <CheckRow
              mt={26}
              unchecked
              label="Firefox das Installieren und Durchführen von Studien erlauben"
              link="Firefox-Studien ansehen"
            />
            <CheckRow
              mt={10}
              label="Nicht _gesendete Absturzberichte automatisch von Firefox senden lassen"
              link="Weitere Informationen"
            />

            <Rule />
            <SectionTitle>Sicherheit</SectionTitle>

            <GroupTitle $mt={22}>Schutz vor betrügerischen Inhalten und gefährlicher Software</GroupTitle>
            <CheckRow
              mt={11}
              label="Gefährliche und _betrügerische Inhalte blockieren"
              link="Weitere Informationen"
            />
            <CheckRow mt={15} indent label="Gefährliche _Downloads blockieren" />
            <CheckRow mt={15} indent label="Vor unerwünschter und ungewöhnlicher _Software warnen" />

            <GroupTitle $mt={54}>Zertifikate</GroupTitle>
            <Split $mt={6}>
              <OcspChoice>
                <Choice $tall>
                  <Box type="checkbox" defaultChecked />
                  <Ak t="Aktuelle _Gültigkeit von Zertifikaten durch Anfrage bei OCSP-Server bestätigen lassen" />
                </Choice>
              </OcspChoice>
              <Stack>
                <PrefButton>
                  <Ak t="_Zertifikate anzeigen..." />
                </PrefButton>
                <PrefButton>
                  <Ak t="_Kryptographie-Module..." />
                </PrefButton>
              </Stack>
            </Split>

            <GroupTitle $mt={52}>Nur-HTTPS-Modus</GroupTitle>
            <Paragraph>
              HTTPS bietet eine sichere, verschlüsselte Verbindung zwischen Firefox und den von Ihnen besuchten Websites.
              Die meisten Websites unterstützen HTTPS und wenn der Nur-HTTPS-Modus aktiviert ist, wird Firefox alle
              Verbindungen zu HTTPS aufrüsten.
            </Paragraph>
            <MoreLine>
              <TextLink href="#">Weitere Informationen</TextLink>
            </MoreLine>
            <Split $mt={3}>
              <Radios role="radiogroup" aria-label="Nur-HTTPS-Modus">
                <Choice>
                  <Box type="radio" name="https" />
                  Nur-HTTPS-Modus in allen Fenstern aktivieren
                </Choice>
                <Choice>
                  <Box type="radio" name="https" />
                  Nur-HTTPS-Modus nur in privaten Fenstern aktivieren
                </Choice>
                <Choice>
                  <Box type="radio" name="https" defaultChecked />
                  Nur-HTTPS-Modus nicht aktivieren
                </Choice>
              </Radios>
              <PrefButton disabled>
                <Ak t="A_usnahmen verwalten..." />
              </PrefButton>
            </Split>
          </Column>
        </Main>

        <ScrollTrack>
          <ScrollEnd aria-label="Nach oben">
            <Line size={9} box={9} w={2}>
              <path d="m1 6.500 3.500-4 3.500 4" />
            </Line>
          </ScrollEnd>
          <Thumb />
          <ScrollEnd aria-label="Nach unten">
            <Line size={9} box={9} w={2}>
              <path d="m1 2.500 3.500 4 3.500-4" />
            </Line>
          </ScrollEnd>
        </ScrollTrack>
      </Page>

      <Taskbar>
        <TaskGroup>
          <SystemButton aria-label="Start">
            <WindowsIcon />
          </SystemButton>
          <SystemButton aria-label="Taskansicht">
            <TaskViewIcon />
          </SystemButton>
          <AppGroup>
            {apps.map(([label, icon]) => (
              <TaskButton
                key={label}
                aria-label={label}
                $open={label === "Explorer" || label === "Firefox"}
                $active={label === "Firefox"}
              >
                {icon}
              </TaskButton>
            ))}
          </AppGroup>
        </TaskGroup>
        <TaskGroup>
          <Weather>
            <WeatherIcon />
            <span>11°C</span>
            <span>Teilw. sonnig</span>
          </Weather>
          <TrayIcons>
            <Line size={16} w={1.300}>
              <path d="m2.500 10.500 5.500-5 5.500 5" />
            </Line>
            <WifiIcon />
            <BatteryIcon />
            <SpeakerIcon />
            <PenIcon />
          </TrayIcons>
          <Clock>
            <span>09:04</span>
            <span>23.04.2023</span>
          </Clock>
          <NoteButton aria-label="Benachrichtigungen">
            <NoteIcon />
          </NoteButton>
          <ShowDesktop aria-label="Desktop anzeigen" />
        </TaskGroup>
      </Taskbar>
    </Screen>
  );
}
